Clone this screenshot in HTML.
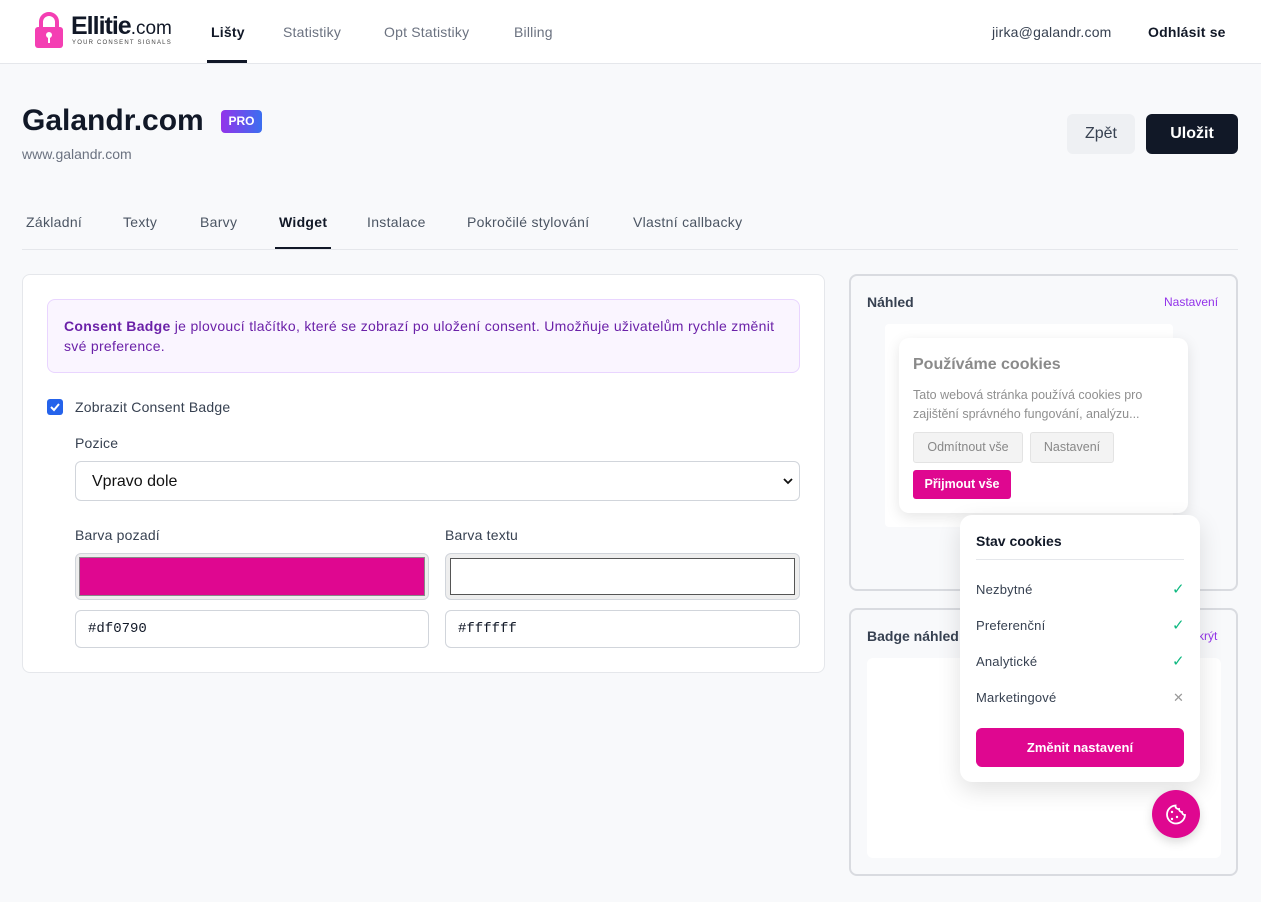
<!DOCTYPE html>
<html><head><meta charset="utf-8"><style>
*{box-sizing:border-box;margin:0;padding:0}
body{width:1261px;height:902px;background:#f8f9fb;font-family:"Liberation Sans",sans-serif;color:#111827;position:relative;overflow:hidden}
.abs{position:absolute}
.hdr{left:0;top:0;width:1261px;height:64px;background:#fff;border-bottom:1px solid #e5e7eb}
.nav{font-size:14px;color:#6b7280;top:24px;letter-spacing:.2px}
.tab{font-size:14px;color:#4b5563;top:214px;letter-spacing:.3px}
.card{background:#fff;border:1px solid #e5e7eb;border-radius:8px}
.panel{background:#f8f9fb;border:2px solid #d9dbe0;border-radius:8px}
.lbl{font-size:14px;color:#374151;letter-spacing:.2px}
.inp{background:#fff;border:1px solid #d1d5db;border-radius:6px}
</style></head><body>
<div class="abs hdr"></div>
<svg class="abs" style="left:34px;top:11px" width="30" height="38" viewBox="0 0 30 38"><path d="M7 17V11a8 8 0 0 1 16 0v6" fill="none" stroke="#f43fb3" stroke-width="4"/><rect x="1" y="16" width="28" height="21" rx="3" fill="#f43fb3"/><circle cx="15" cy="24" r="3" fill="#fff"/><rect x="14" y="25" width="2" height="7" fill="#fff"/></svg>
<div class="abs" style="left:71px;top:12px;font-size:25px;font-weight:bold;letter-spacing:-1px">Ellitie<span style="font-weight:normal;font-size:19px;letter-spacing:0">.com</span></div>
<div class="abs" style="left:72px;top:40px;font-size:6px;letter-spacing:1.2px;color:#444">YOUR CONSENT SIGNALS</div>
<div class="abs nav" style="left:211px;color:#111827;font-weight:bold">Lišty</div>
<div class="abs" style="left:207px;top:60px;width:40px;height:3px;background:#111827"></div>
<div class="abs nav" style="left:283px">Statistiky</div>
<div class="abs nav" style="left:384px">Opt Statistiky</div>
<div class="abs nav" style="left:514px">Billing</div>
<div class="abs nav" style="left:992px;color:#374151">jirka@galandr.com</div>
<div class="abs nav" style="left:1148px;color:#111827;font-weight:bold">Odhlásit se</div>

<div class="abs" style="left:22px;top:104px;font-size:30px;font-weight:bold">Galandr.com</div>
<div class="abs" style="left:221px;top:110px;width:41px;height:23px;border-radius:4px;background:linear-gradient(90deg,#9333ea,#3b6ff0);color:#fff;font-size:12px;font-weight:bold;text-align:center;line-height:23px">PRO</div>
<div class="abs" style="left:22px;top:146px;font-size:14px;color:#6b7280">www.galandr.com</div>
<div class="abs" style="left:1067px;top:114px;width:68px;height:40px;background:#eef0f3;border-radius:6px;font-size:16px;color:#374151;text-align:center;line-height:40px">Zpět</div>
<div class="abs" style="left:1146px;top:114px;width:92px;height:40px;background:#111827;border-radius:6px;font-size:16px;font-weight:bold;color:#fff;text-align:center;line-height:40px">Uložit</div>

<div class="abs tab" style="left:26px">Základní</div>
<div class="abs tab" style="left:123px">Texty</div>
<div class="abs tab" style="left:200px">Barvy</div>
<div class="abs tab" style="left:279px;color:#111827;font-weight:bold">Widget</div>
<div class="abs tab" style="left:367px">Instalace</div>
<div class="abs tab" style="left:467px">Pokročilé stylování</div>
<div class="abs tab" style="left:633px">Vlastní callbacky</div>
<div class="abs" style="left:22px;top:249px;width:1216px;height:1px;background:#e5e7eb"></div>
<div class="abs" style="left:275px;top:247px;width:56px;height:2px;background:#111827"></div>

<div class="abs card" style="left:22px;top:274px;width:803px;height:399px"></div>
<div class="abs" style="left:47px;top:299px;width:753px;height:74px;background:#faf5ff;border:1px solid #e9d5ff;border-radius:8px;padding:16px 16px;font-size:14px;line-height:20px;color:#6b21a8;letter-spacing:.3px"><b>Consent Badge</b> je plovoucí tlačítko, které se zobrazí po uložení consent. Umožňuje uživatelům rychle změnit<br>své preference.</div>
<div class="abs" style="left:47px;top:399px;width:16px;height:16px;background:#2563eb;border-radius:3px"><svg width="16" height="16"><path d="M4 8l3 3 5-6" stroke="#fff" stroke-width="2" fill="none"/></svg></div>
<div class="abs lbl" style="left:75px;top:399px">Zobrazit Consent Badge</div>
<div class="abs lbl" style="left:75px;top:435px">Pozice</div>
<div class="abs inp" style="left:75px;top:461px;width:725px;height:40px;font-size:16px;padding:11px 16px;color:#111">Vpravo dole<svg class="abs" style="right:6px;top:15px" width="10" height="8"><path d="M1 2l4 4 4-4" stroke="#111" stroke-width="1.8" fill="none"/></svg></div>
<div class="abs lbl" style="left:75px;top:527px">Barva pozadí</div>
<div class="abs lbl" style="left:445px;top:527px">Barva textu</div>
<div class="abs inp" style="left:75px;top:553px;width:354px;height:47px;padding:3px;background:#eee"><div style="width:100%;height:100%;background:#df0790;border:1px solid #888"></div></div>
<div class="abs inp" style="left:445px;top:553px;width:355px;height:47px;padding:4px;background:#eee"><div style="width:100%;height:100%;background:#fff;border:1px solid #555"></div></div>
<div class="abs inp" style="left:75px;top:610px;width:354px;height:38px;font-family:'Liberation Mono',monospace;font-size:14px;padding:10px 12px">#df0790</div>
<div class="abs inp" style="left:445px;top:610px;width:355px;height:38px;font-family:'Liberation Mono',monospace;font-size:14px;padding:10px 12px">#ffffff</div>

<div class="abs panel" style="left:849px;top:274px;width:389px;height:317px"></div>
<div class="abs" style="left:867px;top:294px;font-size:14px;font-weight:bold;color:#374151">Náhled</div>
<div class="abs" style="left:1164px;top:295px;font-size:12px;color:#9333ea">Nastavení</div>
<div class="abs" style="left:885px;top:324px;width:288px;height:203px;background:#fff;border-radius:4px"></div>
<div class="abs" style="left:899px;top:338px;width:289px;height:175px;background:#fff;border-radius:10px;box-shadow:0 4px 14px rgba(0,0,0,.1)"></div>
<div class="abs" style="left:913px;top:356px;font-size:16px;font-weight:bold;color:#8a8a8a">Používáme cookies</div>
<div class="abs" style="left:913px;top:386px;font-size:12.5px;line-height:19px;color:#8f8f8f">Tato webová stránka používá cookies pro<br>zajištění správného fungování, analýzu...</div>
<div class="abs" style="left:913px;top:432px;width:110px;height:31px;background:#f3f3f3;border:1px solid #e3e3e3;border-radius:3px;font-size:12.5px;color:#888;text-align:center;line-height:29px">Odmítnout vše</div>
<div class="abs" style="left:1030px;top:432px;width:84px;height:31px;background:#f3f3f3;border:1px solid #e3e3e3;border-radius:3px;font-size:12.5px;color:#888;text-align:center;line-height:29px">Nastavení</div>
<div class="abs" style="left:913px;top:470px;width:98px;height:29px;background:#df0790;border-radius:3px;font-size:12.5px;font-weight:bold;color:#fff;text-align:center;line-height:29px">Přijmout vše</div>

<div class="abs panel" style="left:849px;top:608px;width:389px;height:268px"></div>
<div class="abs" style="left:867px;top:628px;font-size:14px;font-weight:bold;color:#374151">Badge náhled</div>
<div class="abs" style="left:1190px;top:629px;font-size:12px;color:#9333ea">Skrýt</div>
<div class="abs" style="left:867px;top:658px;width:354px;height:200px;background:#fff;border-radius:6px"></div>

<div class="abs" style="left:960px;top:515px;width:240px;height:267px;background:#fff;border-radius:12px;box-shadow:0 8px 24px rgba(0,0,0,.12)"></div>
<div class="abs" style="left:976px;top:533px;font-size:14px;font-weight:bold">Stav cookies</div>
<div class="abs" style="left:976px;top:559px;width:208px;height:1px;background:#e5e7eb"></div>
<div class="abs lbl" style="left:976px;top:582px;font-size:13px">Nezbytné</div>
<div class="abs lbl" style="left:976px;top:618px;font-size:13px">Preferenční</div>
<div class="abs lbl" style="left:976px;top:654px;font-size:13px">Analytické</div>
<div class="abs lbl" style="left:976px;top:690px;font-size:13px">Marketingové</div>
<div class="abs" style="left:1172px;top:580px;color:#10b981;font-size:15px">✓</div>
<div class="abs" style="left:1172px;top:616px;color:#10b981;font-size:15px">✓</div>
<div class="abs" style="left:1172px;top:652px;color:#10b981;font-size:15px">✓</div>
<div class="abs" style="left:1173px;top:690px;color:#999;font-size:13px">✕</div>
<div class="abs" style="left:976px;top:728px;width:208px;height:39px;background:#df0790;border-radius:6px;color:#fff;font-size:13px;font-weight:bold;text-align:center;line-height:39px">Změnit nastavení</div>
<div class="abs" style="left:1152px;top:790px;width:48px;height:48px;border-radius:50%;background:#df0790;box-shadow:0 4px 10px rgba(0,0,0,.15)"><svg width="48" height="48" viewBox="0 0 48 48"><path d="M33 25a9 9 0 1 1-9.5-9.5 3 3 0 0 0 3.5 3.5 3 3 0 0 0 3 3 3 3 0 0 0 3 3z" fill="none" stroke="#fff" stroke-width="1.8"/><circle cx="20" cy="22" r="1.2" fill="#fff"/><circle cx="25" cy="27" r="1.2" fill="#fff"/><circle cx="20" cy="29" r="1.2" fill="#fff"/></svg></div>
</body></html>
